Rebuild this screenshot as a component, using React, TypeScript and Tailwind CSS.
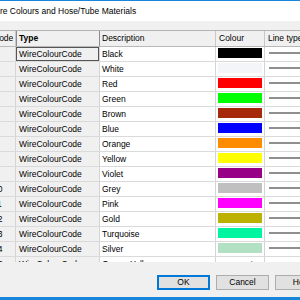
import React from 'react'

interface Row {
  code: number
  desc: string
  swatch?: string
  auto?: boolean
}

const rows: Row[] = [
  { code: 1, desc: 'Black', swatch: 'bg-[#000000]' },
  { code: 2, desc: 'White', swatch: 'bg-[#f4f5f8]' },
  { code: 3, desc: 'Red', swatch: 'bg-[#ff0000]' },
  { code: 4, desc: 'Green', swatch: 'bg-[#00ff00]' },
  { code: 5, desc: 'Brown', swatch: 'bg-[#a5290a]' },
  { code: 6, desc: 'Blue', swatch: 'bg-[#0000ff]' },
  { code: 7, desc: 'Orange', swatch: 'bg-[#ff8c00]' },
  { code: 8, desc: 'Yellow', swatch: 'bg-[#ffff00]' },
  { code: 9, desc: 'Violet', swatch: 'bg-[#990088]' },
  { code: 10, desc: 'Grey', swatch: 'bg-[#c0c0c0]' },
  { code: 11, desc: 'Pink', swatch: 'bg-[#ff00ff]' },
  { code: 12, desc: 'Gold', swatch: 'bg-[#bcb000]' },
  { code: 13, desc: 'Turquoise', swatch: 'bg-[#00f5a0]' },
  { code: 14, desc: 'Silver', swatch: 'bg-[#b3dfc3]' },
  { code: 15, desc: 'Green_Yellow', auto: true },
]

export default function App() {
  return (
    <div className="w-[300px] h-[300px] overflow-hidden bg-[#f0f0f0] flex flex-col font-['Liberation_Sans',sans-serif] text-[8.5px] text-black leading-none">
      {/* window frame + title */}
      <div className="h-[1px] bg-[#1a86d9] shrink-0" />
      <div className="h-[20px] bg-white flex items-center overflow-hidden shrink-0">
        <span className="-ml-[10px] whitespace-nowrap text-[8.5px]">Wire Colours and Hose/Tube Materials</span>
      </div>
      <div className="h-[9px] shrink-0" />

      {/* grid */}
      <div className="h-[232px] overflow-hidden border-t border-[#b4b4b4] shrink-0">
        <div className="-ml-[10px] w-[400px]">
          <div className="flex h-[16px] bg-[#f0f0f0] border-b border-[#b9b9b9]">
            <div className="w-[26px] border-r border-[#c8c8c8] pl-[3px] flex items-center">Code</div>
            <div className="w-[84px] border-r border-[#8c8c8c] pl-[3px] flex items-center font-bold shadow-[inset_1px_0_0_#8c8c8c]">Type</div>
            <div className="w-[116px] border-r border-[#c8c8c8] pl-[2px] flex items-center">Description</div>
            <div className="w-[49px] border-r border-[#c8c8c8] pl-[3px] flex items-center">Colour</div>
            <div className="w-[80px] pl-[3px] flex items-center">Line type</div>
          </div>
          {rows.map((r, i) => (
            <div key={r.code} className="flex h-[15px] border-b border-[#dadada]">
              <div className="w-[26px] bg-[#f0f0f0] border-r border-[#d4d4d4] pl-[3px] flex items-center">{r.code}</div>
              <div
                className={`w-[84px] bg-[#f0f0f0] border-r border-[#d4d4d4] pl-[3px] flex items-center ${
                  i === 0 ? 'shadow-[inset_0_0_0_1px_#555555]' : ''
                }`}
              >
                WireColourCode
              </div>
              <div className="w-[116px] bg-white border-r border-[#d4d4d4] pl-[2px] flex items-center">{r.desc}</div>
              <div className="w-[49px] bg-white border-r border-[#d4d4d4] pl-[2px] pt-[1px]">
                {r.auto ? (
                  <span className="block pt-[3px] pl-[1px]">Automatic</span>
                ) : (
                  <div className={`w-[44px] h-[10px] ${r.swatch}`} />
                )}
              </div>
              <div className="w-[80px] bg-white pl-[4px] pt-[5px]">
                <div className="h-[2px] w-[70px] bg-[#8f8f8f]" />
              </div>
            </div>
          ))}
        </div>
      </div>

      {/* buttons */}
      <div className="h-[13px] shrink-0" />
      <div className="h-[15px] flex gap-[6px] pl-[157px] shrink-0">
        <button className="w-[53px] h-[15px] shrink-0 bg-[#e1e1e1] border-2 border-[#0078d7] flex items-center justify-center">OK</button>
        <button className="w-[53px] h-[15px] shrink-0 bg-[#e1e1e1] border border-[#adadad] flex items-center justify-center">Cancel</button>
        <button className="w-[53px] h-[15px] shrink-0 bg-[#e1e1e1] border border-[#adadad] flex items-center justify-center">Help</button>
      </div>
      <div className="h-[7px] shrink-0" />
      <div className="h-[3px] bg-[#1a86d9] shrink-0" />
    </div>
  )
}
